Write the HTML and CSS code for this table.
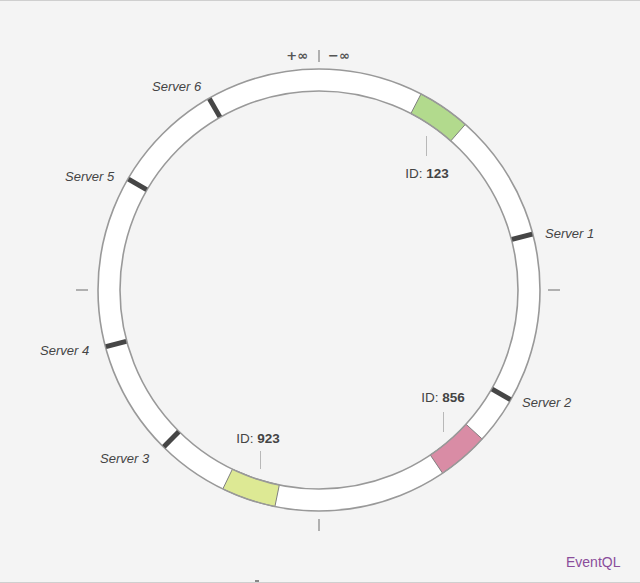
FILE: index.html
```html
<!DOCTYPE html>
<html lang="en">
<head>
<meta charset="utf-8">
<title>Consistent hashing ring</title>
<link rel="stylesheet" href="styles.css">
</head>
<body>
<div class="frame">
  <svg class="ring" width="640" height="581" viewBox="0 1 640 581" xmlns="http://www.w3.org/2000/svg">
    <!-- axis ticks -->
    <line class="tick" x1="319" y1="50" x2="319" y2="62"/>
    <line class="tick" x1="319" y1="519" x2="319" y2="531"/>
    <line class="tick" x1="76" y1="290" x2="88" y2="290"/>
    <line class="tick" x1="548" y1="290" x2="560" y2="290"/>
    <text class="inf" x="308" y="60" text-anchor="end">+∞</text>
    <text class="inf" x="328" y="60">−∞</text>

    <!-- band -->
    <circle class="band" cx="319" cy="290" r="210"/>

    <!-- key segments -->
    <path class="seg seg-green" d="M421.0,94.0 A221,221 0 0 1 465.3,124.4 L450.8,140.9 A199,199 0 0 0 410.9,113.5 Z"/>
    <path class="seg seg-pink" d="M482.2,439.0 A221,221 0 0 1 442.6,473.2 L430.3,455.0 A199,199 0 0 0 466.0,424.2 Z"/>
    <path class="seg seg-yellow" d="M274.9,506.6 A221,221 0 0 1 222.8,489.0 L232.4,469.2 A199,199 0 0 0 279.3,485.0 Z"/>

    <!-- ring borders -->
    <circle class="edge" cx="319" cy="290" r="221"/>
    <circle class="edge" cx="319" cy="290" r="199"/>

    <!-- server markers -->
    <g transform="translate(319,290)">
      <rect class="marker" x="-2.5" y="-220.5" width="5" height="21" transform="rotate(75.3)"/>
      <rect class="marker" x="-2.5" y="-220.5" width="5" height="21" transform="rotate(119.8)"/>
      <rect class="marker" x="-2.5" y="-220.5" width="5" height="21" transform="rotate(224.7)"/>
      <rect class="marker" x="-2.5" y="-220.5" width="5" height="21" transform="rotate(255.1)"/>
      <rect class="marker" x="-2.5" y="-220.5" width="5" height="21" transform="rotate(300.2)"/>
      <rect class="marker" x="-2.5" y="-220.5" width="5" height="21" transform="rotate(330.2)"/>
    </g>

    <!-- server labels -->
    <text class="srv" x="545" y="238">Server 1</text>
    <text class="srv" x="522" y="407">Server 2</text>
    <text class="srv" x="100" y="463">Server 3</text>
    <text class="srv" x="40" y="355">Server 4</text>
    <text class="srv" x="65" y="181">Server 5</text>
    <text class="srv" x="152" y="91">Server 6</text>

    <!-- key labels -->
    <line class="lead" x1="426.5" y1="136" x2="426.5" y2="156"/>
    <text class="key" x="427" y="178" text-anchor="middle">ID: <tspan class="num">123</tspan></text>

    <line class="lead" x1="443.5" y1="412" x2="443.5" y2="432"/>
    <text class="key" x="443" y="402" text-anchor="middle">ID: <tspan class="num">856</tspan></text>

    <line class="lead" x1="260.5" y1="451" x2="260.5" y2="469"/>
    <text class="key" x="258" y="443" text-anchor="middle">ID: <tspan class="num">923</tspan></text>

    <!-- brand -->
    <text class="brand" x="566" y="567">EventQL</text>
    <rect class="nub" x="255" y="580" width="4" height="2"/>
  </svg>
</div>
</body>
</html>
```

FILE: styles.css
```css
html, body {
  margin: 0;
  padding: 0;
  background: #f4f4f4;
}

.frame {
  width: 640px;
  height: 581px;
  border-top: 1px solid #cfcfcf;
  border-bottom: 1px solid #cfcfcf;
  background: #f4f4f4;
  overflow: hidden;
}

.ring {
  display: block;
}

.tick {
  stroke: #9a9a9a;
  stroke-width: 1.5;
}

.inf {
  font: bold 13px "DejaVu Sans", "Liberation Sans", sans-serif;
  fill: #555;
}

.band {
  fill: none;
  stroke: #ffffff;
  stroke-width: 22;
}

.edge {
  fill: none;
  stroke: #999999;
  stroke-width: 1.6;
}

.seg {
  stroke: #7f7f7f;
  stroke-width: 1;
}

.seg-green { fill: #b2da8d; }
.seg-pink { fill: #d98ca5; }
.seg-yellow { fill: #dde994; }

.marker {
  fill: #464646;
}

.srv {
  font: italic 13px "Liberation Sans", Arial, sans-serif;
  fill: #444;
}

.key {
  font: 13.5px "Liberation Sans", Arial, sans-serif;
  fill: #444;
}

.num {
  font-weight: bold;
}

.lead {
  stroke: #b8b8b8;
  stroke-width: 1;
}

.brand {
  font: 14px "Liberation Sans", Arial, sans-serif;
  fill: #8a4d9b;
}

.nub {
  fill: #888;
}
```
